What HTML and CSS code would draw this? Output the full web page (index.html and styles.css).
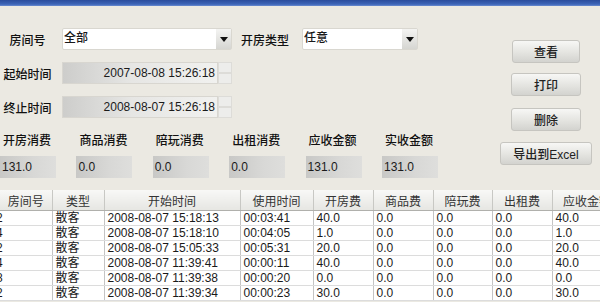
FILE: index.html
```html
<!DOCTYPE html>
<html>
<head>
<meta charset="utf-8">
<link rel="stylesheet" href="styles.css">
</head>
<body>
<div class="titlebar"></div>
<div class="main">
  <div class="form">
    <div class="row">
      <span class="lbl">房间号</span>
      <div class="combo c1"><span class="ctext">全部</span><i class="arrow"></i></div>
      <span class="lbl2">开房类型</span>
      <div class="combo c2"><span class="ctext">任意</span><i class="arrow"></i></div>
    </div>
    <div class="row gap">
      <span class="lbl">起始时间</span>
      <div class="spin"><span class="val">2007-08-08 15:26:18</span><div class="spbtns"><b></b><b></b></div></div>
    </div>
    <div class="row gap">
      <span class="lbl">终止时间</span>
      <div class="spin"><span class="val">2008-08-07 15:26:18</span><div class="spbtns"><b></b><b></b></div></div>
    </div>
    <div class="sums">
      <div class="sum"><div class="slbl">开房消费</div><div class="sfield">131.0</div></div>
      <div class="sum"><div class="slbl">商品消费</div><div class="sfield">0.0</div></div>
      <div class="sum"><div class="slbl">陪玩消费</div><div class="sfield">0.0</div></div>
      <div class="sum"><div class="slbl">出租消费</div><div class="sfield">0.0</div></div>
      <div class="sum"><div class="slbl">应收金额</div><div class="sfield">131.0</div></div>
      <div class="sum"><div class="slbl">实收金额</div><div class="sfield">131.0</div></div>
    </div>
  </div>
  <div class="buttons">
    <button class="btn b1">查看</button>
    <button class="btn b2">打印</button>
    <button class="btn b3">删除</button>
    <button class="btn b4">导出到Excel</button>
  </div>
</div>
<div class="tablewrap">
  <table>
    <colgroup>
      <col style="width:52px"><col style="width:52px"><col style="width:136px"><col style="width:73px"><col style="width:60px"><col style="width:60px"><col style="width:59px"><col style="width:60px"><col style="width:70px">
    </colgroup>
    <thead>
      <tr><th>房间号</th><th>类型</th><th>开始时间</th><th>使用时间</th><th>开房费</th><th>商品费</th><th>陪玩费</th><th>出租费</th><th>应收金额</th></tr>
    </thead>
    <tbody>
      <tr><td class="cut"><span>2</span></td><td>散客</td><td>2008-08-07 15:18:13</td><td>00:03:41</td><td>40.0</td><td>0.0</td><td>0.0</td><td>0.0</td><td>40.0</td></tr>
      <tr><td class="cut"><span>4</span></td><td>散客</td><td>2008-08-07 15:18:10</td><td>00:04:05</td><td>1.0</td><td>0.0</td><td>0.0</td><td>0.0</td><td>1.0</td></tr>
      <tr><td class="cut"><span>2</span></td><td>散客</td><td>2008-08-07 15:05:33</td><td>00:05:31</td><td>20.0</td><td>0.0</td><td>0.0</td><td>0.0</td><td>20.0</td></tr>
      <tr><td class="cut"><span>4</span></td><td>散客</td><td>2008-08-07 11:39:41</td><td>00:00:11</td><td>40.0</td><td>0.0</td><td>0.0</td><td>0.0</td><td>40.0</td></tr>
      <tr><td class="cut"><span>8</span></td><td>散客</td><td>2008-08-07 11:39:38</td><td>00:00:20</td><td>0.0</td><td>0.0</td><td>0.0</td><td>0.0</td><td>0.0</td></tr>
      <tr><td class="cut"><span>2</span></td><td>散客</td><td>2008-08-07 11:39:34</td><td>00:00:23</td><td>30.0</td><td>0.0</td><td>0.0</td><td>0.0</td><td>30.0</td></tr>
    </tbody>
  </table>
</div>
</body>
</html>
```
FILE: styles.css
```css
html, body {
  margin: 0;
  padding: 0;
}
body {
  width: 600px;
  height: 302px;
  overflow: hidden;
  background: #ebe9e2;
  font-family: "Liberation Sans", "Noto Sans CJK SC", sans-serif;
  font-size: 12px;
  color: #1a1a1a;
}
.titlebar {
  height: 6px;
  background: linear-gradient(#2a4c9c, #3d65b8 70%, #6a8cd0);
}
.main {
  display: grid;
  grid-template-columns: 500px 92px;
}
.form {
  padding-top: 22px;
}
.row {
  display: flex;
  align-items: center;
  height: 22px;
}
.row.gap {
  margin-top: 12px;
}
.lbl {
  width: 55px;
  margin-right: 7px;
  text-align: center;
  white-space: nowrap;
  font-weight: 500;
  color: #111;
}
.lbl2 {
  width: 70px;
  box-sizing: border-box;
  padding-left: 9px;
  white-space: nowrap;
  font-weight: 500;
  color: #111;
}
.combo {
  display: flex;
  height: 22px;
  box-sizing: border-box;
  background: #fff;
  border: 1px solid #d9d7d0;
  border-radius: 2px;
}
.c1 { width: 170px; }
.c2 { width: 116px; }
.ctext {
  flex: 1;
  padding-left: 1px;
  line-height: 19px;
  font-weight: 500;
}
.arrow {
  width: 15px;
  background: linear-gradient(#f4f4f2, #d6d6d2);
  display: flex;
  align-items: center;
  justify-content: center;
}
.arrow::after {
  content: "";
  border-top: 5px solid #111;
  border-left: 4px solid transparent;
  border-right: 4px solid transparent;
}
.spin {
  display: flex;
  width: 170px;
  height: 22px;
}
.val {
  width: 156px;
  box-sizing: border-box;
  border: 1px solid #d8d6d0;
  background: linear-gradient(to right, #cdcdcb, #e6e6e4 45%, #f1f1ef);
  text-align: right;
  padding-right: 2px;
  line-height: 20px;
}
.spbtns {
  width: 14px;
  display: flex;
  flex-direction: column;
}
.spbtns b {
  flex: 1;
  background: #ededeb;
  border: 1px solid #dddcd8;
}
.sums {
  margin-top: 15px;
  display: grid;
  grid-template-columns: repeat(6, 56px);
  column-gap: 20.4px;
}
.slbl {
  height: 16px;
  line-height: 16px;
  padding-left: 3px;
  white-space: nowrap;
  font-weight: 500;
  color: #111;
}
.sfield {
  margin-top: 7px;
  height: 22px;
  line-height: 22px;
  padding-left: 2px;
  background: linear-gradient(to right, #c8c8c6, #d8d8d6 60%, #dededc);
}
.buttons {
  padding-top: 34px;
  display: flex;
  flex-direction: column;
  align-items: center;
}
.btn {
  height: 23px;
  width: 68px;
  padding: 0;
  border: 1px solid #c6c5c0;
  border-radius: 3px;
  background: linear-gradient(#f7f7f5, #e4e4e0 55%, #d3d3cf);
  font-family: "Liberation Sans", "Noto Sans CJK SC", sans-serif;
  font-size: 12px;
  font-weight: 500;
  color: #222;
}
.b2 { margin-top: 10px; width: 70px; }
.b3 { margin-top: 12px; width: 70px; }
.b4 { margin-top: 11px; width: 92px; }
.tablewrap {
  margin-top: 12px;
  width: 600px;
  overflow: hidden;
}
table {
  table-layout: fixed;
  width: 622px;
  border-collapse: collapse;
}
th {
  height: 20px;
  padding: 0;
  font-weight: normal;
  color: #333;
  background: linear-gradient(#f8f8f6, #e6e6e2);
  border-right: 1px solid #c8c8c4;
  border-bottom: 1px solid #b0b0ac;
  white-space: nowrap;
  overflow: hidden;
}
td {
  height: 14px;
  padding: 0 3px;
  line-height: 14px;
  background: #fff;
  border-right: 1px solid #c4c4c4;
  border-bottom: 1px solid #dcdcdc;
  white-space: nowrap;
  overflow: hidden;
}
td.cut span {
  display: inline-block;
  margin-left: -7px;
}
```
